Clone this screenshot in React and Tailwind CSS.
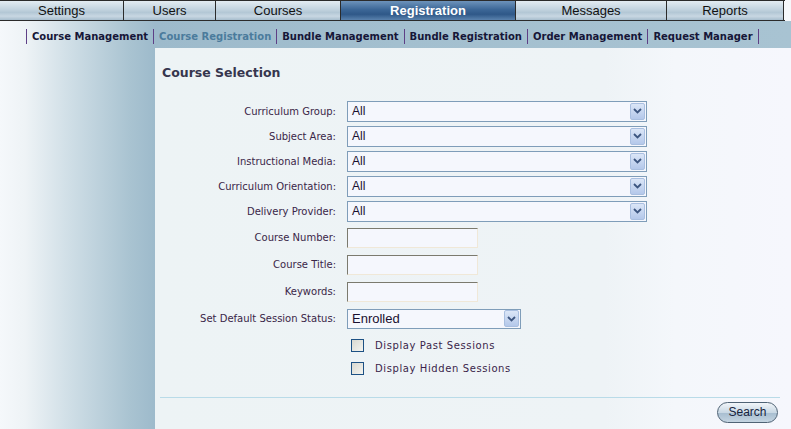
import { useState } from "react";

const tabs = [
  { label: "Settings", w: "w-[123px]" },
  { label: "Users", w: "w-[92px]" },
  { label: "Courses", w: "w-[125px]" },
  { label: "Registration", w: "w-[175px]", active: true },
  { label: "Messages", w: "w-[151px]" },
  { label: "Reports", w: "w-[118px]" },
];

const subnav = [
  "Course Management",
  "Course Registration",
  "Bundle Management",
  "Bundle Registration",
  "Order Management",
  "Request Manager",
];

const selects = [
  "Curriculum Group:",
  "Subject Area:",
  "Instructional Media:",
  "Curriculum Orientation:",
  "Delivery Provider:",
];

const inputs = ["Course Number:", "Course Title:", "Keywords:"];

function Chevron() {
  return (
    <span className="flex h-[17px] w-[15px] items-center justify-center rounded-[2px] border border-[#a9bfe0] bg-gradient-to-b from-[#dbe6f7] to-[#b4c8ea]">
      <svg width="9" height="6" viewBox="0 0 9 6">
        <path d="M1 1 L4.5 4.5 L8 1" fill="none" stroke="#3d5680" strokeWidth="1.8" />
      </svg>
    </span>
  );
}

function FakeSelect({ value, wide }) {
  return (
    <div
      className={`flex items-center justify-between border border-[#7f9db9] bg-[#f5f7fd] pl-[4px] pr-[1px] ${
        wide ? "h-[21px] w-[300px]" : "h-[20px] w-[174px]"
      }`}
    >
      <span
        className={`font-['Liberation_Sans',Arial,sans-serif] text-[#1a1030] ${
          wide ? "text-[12px]" : "text-[13px]"
        }`}
      >
        {value}
      </span>
      <Chevron />
    </div>
  );
}

function Label({ children }) {
  return (
    <div className="flex items-center justify-end whitespace-nowrap pr-[11px] font-['DejaVu_Sans',Verdana,sans-serif] text-[10px] text-[#3a2648]">
      {children}
    </div>
  );
}

function Check({ on, toggle, children }) {
  return (
    <label className="flex h-[13px] items-center gap-[11px]" onClick={toggle}>
      <span className="flex h-[13px] w-[13px] items-center justify-center border border-[#1d5184] bg-[linear-gradient(135deg,#d8d8d0,#f4f4f0)] text-[9px] leading-none">
        {on ? "✓" : ""}
      </span>
      {children}
    </label>
  );
}

export default function App() {
  const [past, setPast] = useState(false);
  const [hidden, setHidden] = useState(false);

  return (
    <div className="h-[429px] w-[791px] overflow-hidden bg-[#f6f8fb] font-['Liberation_Sans',Arial,sans-serif]">
      {/* top tabs */}
      <div className="flex h-[21px] w-[785px] border-t border-b border-[#2b2b2b]">
        {tabs.map((t, i) => (
          <div
            key={t.label}
            className={`flex items-center justify-center text-[13px] ${t.w} ${
              i > 0 ? "border-l border-[#2b2b2b]" : ""
            } ${i === tabs.length - 1 ? "border-r border-[#2b2b2b]" : ""} ${
              t.active
                ? "bg-[linear-gradient(to_bottom,#6d93bb,#3c6797_45%,#2f5888_70%,#5a82ad)] font-bold text-white"
                : "bg-[linear-gradient(to_bottom,#e3ecf2,#c2d3df_45%,#b3c7d5_60%,#c8d7e2_80%,#a7bdcd)] text-[#111]"
            }`}
          >
            {t.label}
          </div>
        ))}
      </div>

      <div className="bg-[linear-gradient(to_right,#f5f8fb_0px,#eef3f6_25px,#cfdee6_70px,#a9c3d1_130px,#9dbacb_155px,#a3bfcf_400px,#a8c3d2)]">
        {/* sub navigation */}
        <div className="flex h-[27px] items-center whitespace-nowrap pl-[26px] pt-[3px] font-['DejaVu_Sans',Verdana,sans-serif] text-[10px] font-bold">
          {subnav.map((s, i) => (
            <span
              key={s}
              className={`shrink-0 border-l border-[#5e3f86] px-[5px] leading-[15px] ${
                i === subnav.length - 1 ? "border-r" : ""
              } ${i === 1 ? "text-[#4b7b9c]" : "text-[#161638]"}`}
            >
              {s}
            </span>
          ))}
        </div>

        <div className="flex h-[381px]">
          <div className="w-[155px] shrink-0" />

          {/* main panel */}
          <div className="flex flex-1 flex-col bg-[linear-gradient(to_right,#edf3f5,#eef3f6_450px,#f4f7fb_520px,#f6f7fd)] pl-[7px] pr-[11px]">
            <h2 className="mt-[16px] font-['DejaVu_Sans',Verdana,sans-serif] text-[12.5px] font-bold text-[#36364e]">
              Course Selection
            </h2>

            <div className="mt-[18px] grid grid-cols-[184px_1fr] gap-y-[4px] pl-[1px]">
              {selects.map((l) => (
                <div key={l} className="contents">
                  <Label>{l}</Label>
                  <FakeSelect value="All" wide />
                </div>
              ))}
            </div>

            <div className="mt-[6px] grid grid-cols-[184px_1fr] gap-y-[7px] pl-[1px]">
              {inputs.map((l) => (
                <div key={l} className="contents">
                  <Label>{l}</Label>
                  <input
                    type="text"
                    className="h-[20px] w-[131px] border border-t-[#7b7a6e] border-l-[#7b7a6e] border-r-[#f0e8d8] border-b-[#f0e8d8] bg-[#f5f7fd] outline-none"
                  />
                </div>
              ))}
              <Label>Set Default Session Status:</Label>
              <FakeSelect value="Enrolled" />
            </div>

            <div className="ml-[189px] mt-[10px] flex flex-col gap-[10px] font-['DejaVu_Sans',Verdana,sans-serif] text-[10px] tracking-[0.6px] text-[#3a1f4a]">
              <Check on={past} toggle={() => setPast(!past)}>
                Display Past Sessions
              </Check>
              <Check on={hidden} toggle={() => setHidden(!hidden)}>
                Display Hidden Sessions
              </Check>
            </div>

            <div className="ml-[-2px] mt-[22px] border-t border-[#b9dbe8]" />

            <div className="mt-[4px] flex justify-end pr-[2px]">
              <button className="h-[21px] w-[61px] rounded-full border border-[#4f6375] bg-[linear-gradient(to_bottom,#f1f5f9,#c9d8e4_50%,#a9bfd1_55%,#c4d4e1)] text-[12px] text-[#17233d]">
                Search
              </button>
            </div>
          </div>
        </div>
      </div>
    </div>
  );
}
